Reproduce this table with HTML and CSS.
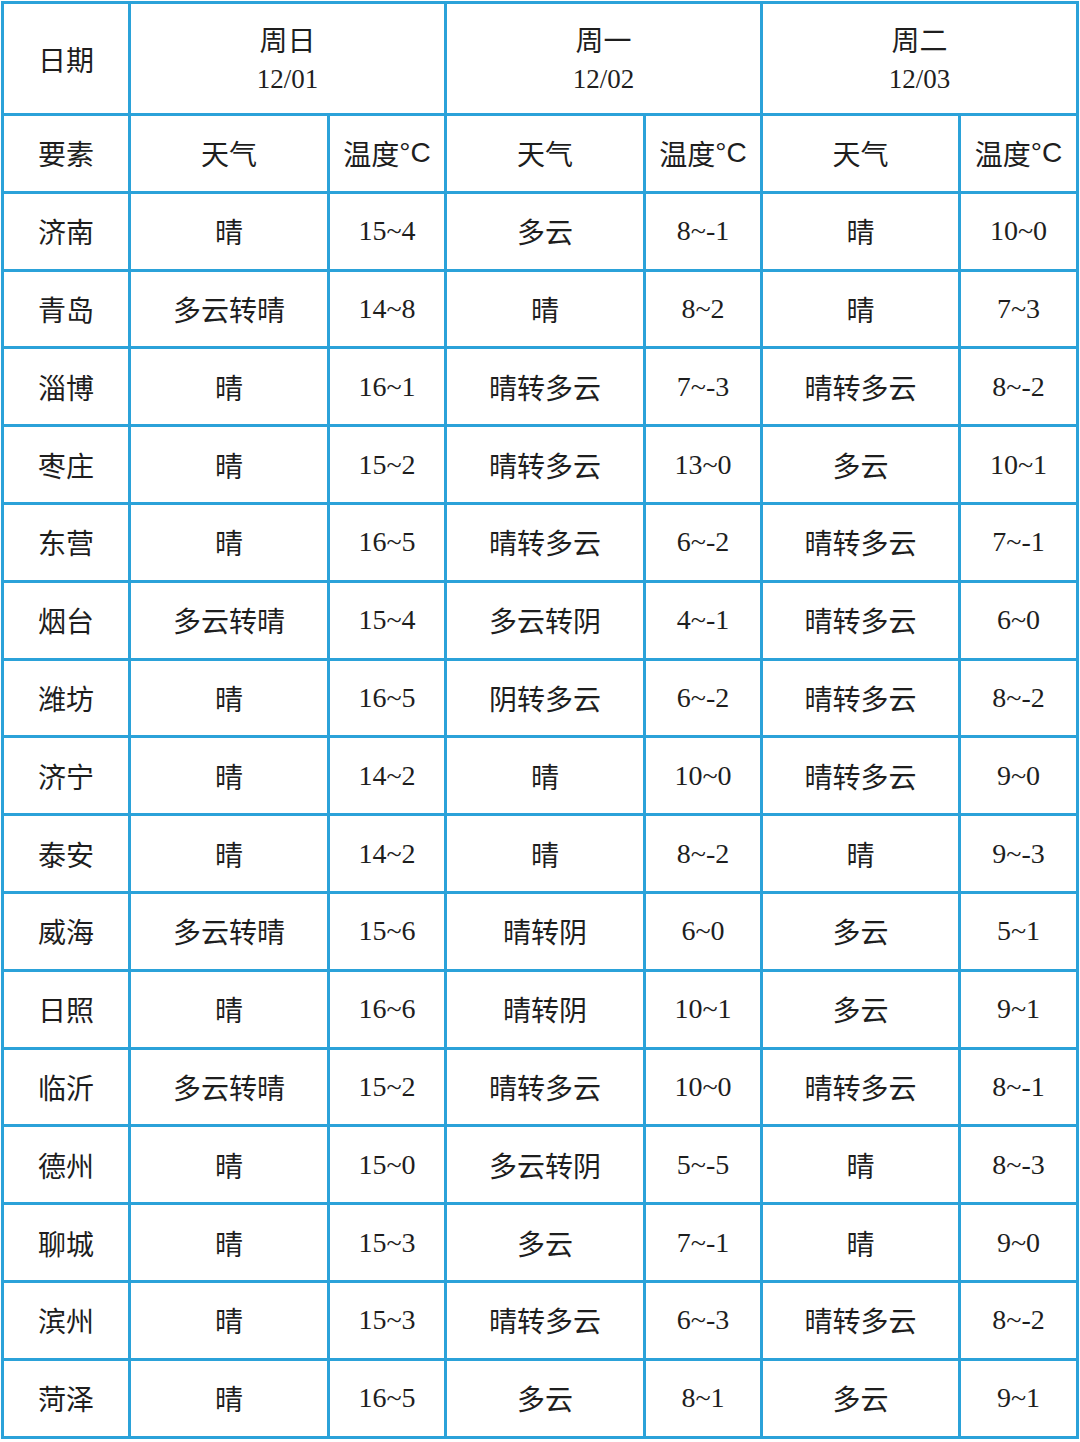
FILE: index.html
```html
<!DOCTYPE html>
<html lang="zh">
<head>
<meta charset="utf-8">
<link rel="stylesheet" href="styles.css">
</head>
<body>
<div class="grid" id="g">
  <div class="c zh">日期</div>
  <div class="c day span2"><span class="zh">周日</span><span class="num">12/01</span></div>
  <div class="c day span2"><span class="zh">周一</span><span class="num">12/02</span></div>
  <div class="c day span2"><span class="zh">周二</span><span class="num">12/03</span></div>
  <div class="c zh">要素</div>
  <div class="c zh">天气</div><div class="c zh">温度<span class="deg">°C</span></div>
  <div class="c zh">天气</div><div class="c zh">温度<span class="deg">°C</span></div>
  <div class="c zh">天气</div><div class="c zh">温度<span class="deg">°C</span></div>
  <div class="c zh">济南</div><div class="c zh">晴</div><div class="c num">15~4</div><div class="c zh">多云</div><div class="c num">8~-1</div><div class="c zh">晴</div><div class="c num">10~0</div>
  <div class="c zh">青岛</div><div class="c zh">多云转晴</div><div class="c num">14~8</div><div class="c zh">晴</div><div class="c num">8~2</div><div class="c zh">晴</div><div class="c num">7~3</div>
  <div class="c zh">淄博</div><div class="c zh">晴</div><div class="c num">16~1</div><div class="c zh">晴转多云</div><div class="c num">7~-3</div><div class="c zh">晴转多云</div><div class="c num">8~-2</div>
  <div class="c zh">枣庄</div><div class="c zh">晴</div><div class="c num">15~2</div><div class="c zh">晴转多云</div><div class="c num">13~0</div><div class="c zh">多云</div><div class="c num">10~1</div>
  <div class="c zh">东营</div><div class="c zh">晴</div><div class="c num">16~5</div><div class="c zh">晴转多云</div><div class="c num">6~-2</div><div class="c zh">晴转多云</div><div class="c num">7~-1</div>
  <div class="c zh">烟台</div><div class="c zh">多云转晴</div><div class="c num">15~4</div><div class="c zh">多云转阴</div><div class="c num">4~-1</div><div class="c zh">晴转多云</div><div class="c num">6~0</div>
  <div class="c zh">潍坊</div><div class="c zh">晴</div><div class="c num">16~5</div><div class="c zh">阴转多云</div><div class="c num">6~-2</div><div class="c zh">晴转多云</div><div class="c num">8~-2</div>
  <div class="c zh">济宁</div><div class="c zh">晴</div><div class="c num">14~2</div><div class="c zh">晴</div><div class="c num">10~0</div><div class="c zh">晴转多云</div><div class="c num">9~0</div>
  <div class="c zh">泰安</div><div class="c zh">晴</div><div class="c num">14~2</div><div class="c zh">晴</div><div class="c num">8~-2</div><div class="c zh">晴</div><div class="c num">9~-3</div>
  <div class="c zh">威海</div><div class="c zh">多云转晴</div><div class="c num">15~6</div><div class="c zh">晴转阴</div><div class="c num">6~0</div><div class="c zh">多云</div><div class="c num">5~1</div>
  <div class="c zh">日照</div><div class="c zh">晴</div><div class="c num">16~6</div><div class="c zh">晴转阴</div><div class="c num">10~1</div><div class="c zh">多云</div><div class="c num">9~1</div>
  <div class="c zh">临沂</div><div class="c zh">多云转晴</div><div class="c num">15~2</div><div class="c zh">晴转多云</div><div class="c num">10~0</div><div class="c zh">晴转多云</div><div class="c num">8~-1</div>
  <div class="c zh">德州</div><div class="c zh">晴</div><div class="c num">15~0</div><div class="c zh">多云转阴</div><div class="c num">5~-5</div><div class="c zh">晴</div><div class="c num">8~-3</div>
  <div class="c zh">聊城</div><div class="c zh">晴</div><div class="c num">15~3</div><div class="c zh">多云</div><div class="c num">7~-1</div><div class="c zh">晴</div><div class="c num">9~0</div>
  <div class="c zh">滨州</div><div class="c zh">晴</div><div class="c num">15~3</div><div class="c zh">晴转多云</div><div class="c num">6~-3</div><div class="c zh">晴转多云</div><div class="c num">8~-2</div>
  <div class="c zh">菏泽</div><div class="c zh">晴</div><div class="c num">16~5</div><div class="c zh">多云</div><div class="c num">8~1</div><div class="c zh">多云</div><div class="c num">9~1</div>
</div>
</body>
</html>
```
FILE: styles.css
```css
html, body {
  margin: 0;
  padding: 0;
  background: #ffffff;
}
body {
  padding: 1px 0 0 1px;
}
.grid {
  display: grid;
  width: 1078px;
  box-sizing: border-box;
  padding: 3px;
  gap: 3px;
  background: #2ba2d9;
  grid-template-columns: 124px 196px 114px 196px 114px 195px 115px;
  grid-template-rows: 109px repeat(17, 74.8px);
}
.c {
  background: #ffffff;
  display: flex;
  align-items: center;
  justify-content: center;
  color: #1e1e1e;
  white-space: nowrap;
}
.span2 {
  grid-column: span 2;
}
.zh {
  font-family: "Noto Sans CJK SC", "Noto Sans", sans-serif;
  font-size: 28px;
}
.deg {
  font-family: "Liberation Sans", Arial, sans-serif;
}
.num {
  font-family: "Liberation Serif", "Times New Roman", serif;
  font-size: 28px;
}
.day {
  flex-direction: column;
  line-height: 40px;
  padding-top: 1px;
}
.day .num {
  font-size: 27px;
}
```
